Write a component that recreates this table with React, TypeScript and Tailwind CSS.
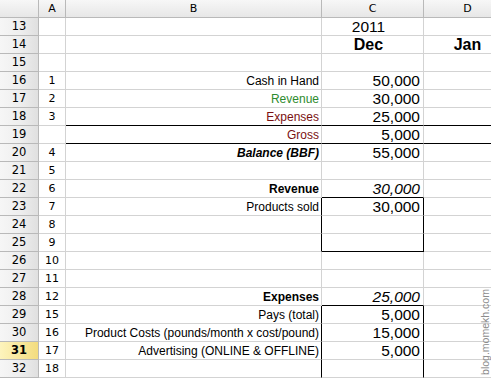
import React from "react";
import clsx from "clsx";

type Row = {
  n: number;
  a?: string;
  b?: React.ReactNode;
  bCls?: string;
  c?: React.ReactNode;
  cCls?: string;
  center?: boolean;
  d?: React.ReactNode;
  rule?: boolean; // black line under B..D
  cBottom?: boolean; // black line under C
  box?: boolean; // black sides on C
  sel?: boolean;
};

const rows: Row[] = [
  { n: 13, c: "2011", center: true, cCls: "text-[15.5px]" },
  { n: 14, c: "Dec", center: true, cCls: "font-bold text-[16px]", d: "Jan" },
  { n: 15 },
  { n: 16, a: "1", b: "Cash in Hand", c: "50,000" },
  { n: 17, a: "2", b: "Revenue", bCls: "text-[#2e8b2e]", c: "30,000" },
  { n: 18, a: "3", b: "Expenses", bCls: "text-[#7a1010]", c: "25,000", rule: true },
  { n: 19, b: "Gross", bCls: "text-[#7a1010]", c: "5,000", rule: true },
  { n: 20, a: "4", b: "Balance (BBF)", bCls: "font-bold italic", c: "55,000" },
  { n: 21, a: "5" },
  { n: 22, a: "6", b: "Revenue", bCls: "font-bold", c: "30,000", cCls: "italic", cBottom: true },
  { n: 23, a: "7", b: "Products sold", c: "30,000", box: true },
  { n: 24, a: "8", box: true },
  { n: 25, a: "9", box: true, cBottom: true },
  { n: 26, a: "10" },
  { n: 27, a: "11" },
  { n: 28, a: "12", b: "Expenses", bCls: "font-bold", c: "25,000", cCls: "italic", cBottom: true },
  { n: 29, a: "15", b: "Pays (total)", c: "5,000", box: true },
  { n: 30, a: "16", b: "Product Costs (pounds/month x cost/pound)", c: "15,000", box: true },
  { n: 31, a: "17", b: "Advertising (ONLINE & OFFLINE)", c: "5,000", box: true, sel: true },
  { n: 32, a: "18", box: true },
];

const hdrFont = { fontFamily: '"DejaVu Sans", Verdana, sans-serif' };

function SheetRow({ r }: { r: Row }) {
  return (
    <div className="flex h-[18px]">
      <div
        style={hdrFont}
        className={clsx(
          "w-[39px] shrink-0 border-r border-b border-[#b9b9b9] text-center text-[11.5px] leading-[17px] text-black",
          r.sel
            ? "bg-gradient-to-r from-[#fdf4bd] to-[#f3dc7e] font-bold"
            : "bg-gradient-to-r from-[#f6f6f6] via-[#efefef] to-[#e0e0e0]"
        )}
      >
        {r.n}
      </div>
      <div
        style={hdrFont}
        className="w-[27px] shrink-0 border-r border-b border-[#d3d3d3] text-center text-[11px] leading-[18px]"
      >
        {r.a}
      </div>
      <div
        className={clsx(
          "w-[256px] shrink-0 border-r border-b truncate pr-[2px] text-right text-[12px] leading-[18px]",
          r.rule ? "border-b-black" : "border-b-[#d3d3d3]",
          r.box ? "border-r-black" : "border-r-[#d3d3d3]",
          r.bCls
        )}
      >
        {r.b}
      </div>
      <div
        className={clsx(
          "w-[102px] shrink-0 border-r border-b leading-[17px]",
          r.center ? "pr-[8px] text-center" : "pr-[3px] text-right text-[15.5px]",
          r.rule || r.cBottom ? "border-b-black" : "border-b-[#d3d3d3]",
          r.box ? "border-r-black" : "border-r-[#d3d3d3]",
          r.cCls
        )}
      >
        {r.c}
      </div>
      <div
        className={clsx(
          "w-[88px] shrink-0 border-r border-b border-r-[#d3d3d3] text-center text-[16px] font-bold leading-[17px]",
          r.rule ? "border-b-black" : "border-b-[#d3d3d3]"
        )}
      >
        {r.d}
      </div>
    </div>
  );
}

export default function App() {
  return (
    <div
      className="relative h-[378px] w-[491px] overflow-hidden bg-white text-black"
      style={{ fontFamily: '"Liberation Sans", Arial, sans-serif' }}
    >
      <div
        style={hdrFont}
        className="flex h-[18px] bg-gradient-to-b from-[#f7f7f7] to-[#e6e6e6] text-[11px] leading-[17px]"
      >
        <div className="w-[39px] shrink-0 border-r border-b border-[#b9b9b9]" />
        <div className="w-[27px] shrink-0 border-r border-b border-[#b9b9b9] text-center">A</div>
        <div className="w-[256px] shrink-0 border-r border-b border-[#b9b9b9] text-center">B</div>
        <div className="w-[102px] shrink-0 border-r border-b border-[#b9b9b9] text-center">C</div>
        <div className="w-[88px] shrink-0 border-r border-b border-[#b9b9b9] text-center">D</div>
      </div>
      {rows.map((r) => (
        <SheetRow key={r.n} r={r} />
      ))}
      <div className="pointer-events-none absolute left-[479px] top-[287px] flex h-[89px] w-[12px] items-center justify-center">
        <span className="-rotate-90 whitespace-nowrap text-[10.5px] leading-[12px] text-[#8c8c8c]">
          blog.momekh.com
        </span>
      </div>
    </div>
  );
}
